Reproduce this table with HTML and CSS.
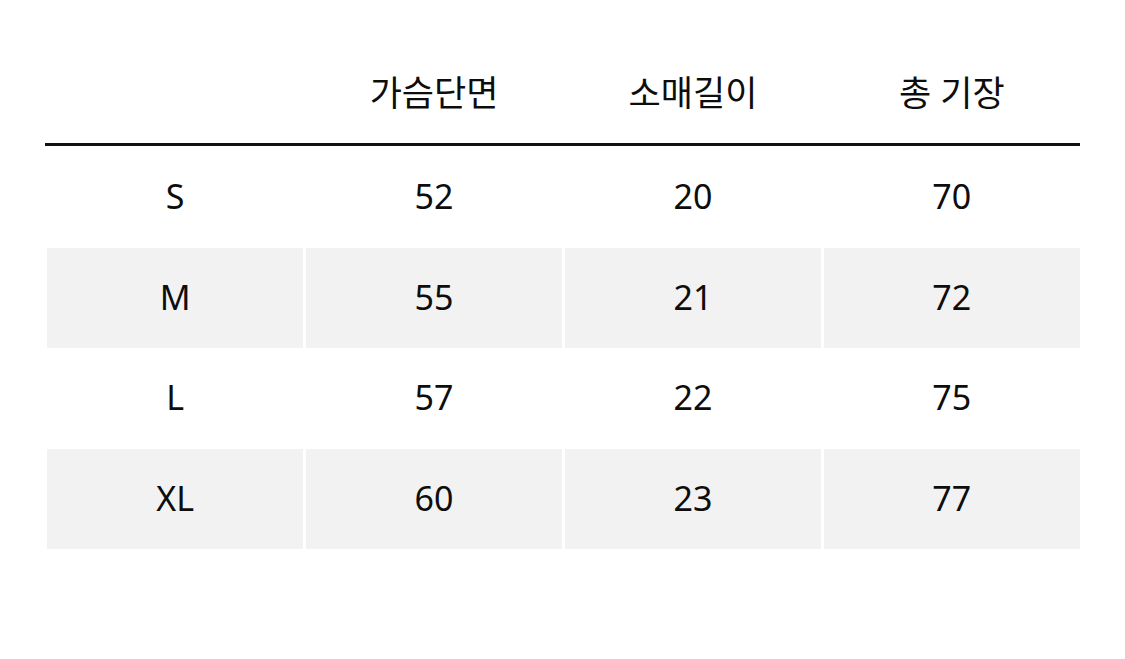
FILE: index.html
```html
<!DOCTYPE html>
<html lang="ko">
<head>
<meta charset="utf-8">
<link rel="stylesheet" href="styles.css">
</head>
<body>
<div class="size-table">
  <div class="row head">
    <div class="cell"></div>
    <div class="cell">가슴단면</div>
    <div class="cell">소매길이</div>
    <div class="cell">총 기장</div>
  </div>
  <div class="rule"></div>
  <div class="row">
    <div class="cell">S</div><div class="cell">52</div><div class="cell">20</div><div class="cell">70</div>
  </div>
  <div class="row shaded">
    <div class="cell">M</div><div class="cell">55</div><div class="cell">21</div><div class="cell">72</div>
  </div>
  <div class="row">
    <div class="cell">L</div><div class="cell">57</div><div class="cell">22</div><div class="cell">75</div>
  </div>
  <div class="row shaded">
    <div class="cell">XL</div><div class="cell">60</div><div class="cell">23</div><div class="cell">77</div>
  </div>
</div>
</body>
</html>
```

FILE: styles.css
```css
html, body {
  margin: 0;
  padding: 0;
  background: #ffffff;
}

body {
  font-family: "Noto Sans", "Noto Sans CJK KR", sans-serif;
  color: #0d0d0d;
}

.size-table {
  width: 1035px;
  margin: 45px 0 0 45px;
}

.row {
  display: grid;
  grid-template-columns: repeat(4, 1fr);
  column-gap: 2.5px;
  padding-left: 2px;
  height: 100.5px;
}

.row.head {
  height: 98px;
}

.cell {
  display: flex;
  align-items: center;
  justify-content: center;
  font-size: 34px;
  line-height: 1;
  padding-bottom: 2px;
}

.head .cell {
  font-size: 35px;
  padding-bottom: 4px;
}

.shaded .cell {
  background: #f2f2f2;
}

.rule {
  height: 3px;
  background: #111111;
  margin-bottom: 1px;
}
```
